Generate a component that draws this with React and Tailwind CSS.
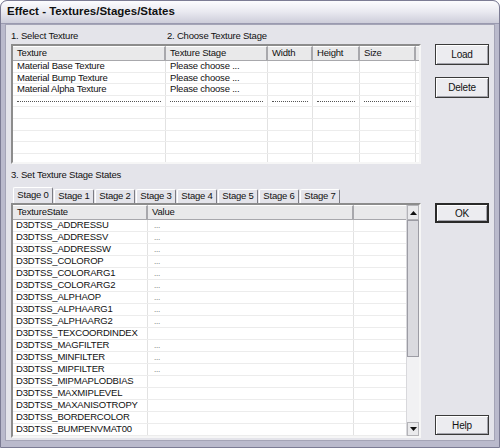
import React from 'react';

const topRows = [
  ['Material Base Texture', 'Please choose ...'],
  ['Material Bump Texture', 'Please choose ...'],
  ['Material Alpha Texture', 'Please choose ...'],
];

const topCols = [153, 102, 45, 47, 56];

const states = [
  'ADDRESSU', 'ADDRESSV', 'ADDRESSW', 'COLOROP', 'COLORARG1', 'COLORARG2',
  'ALPHAOP', 'ALPHAARG1', 'ALPHAARG2', 'TEXCOORDINDEX', 'MAGFILTER', 'MINFILTER',
  'MIPFILTER', 'MIPMAPLODBIAS', 'MAXMIPLEVEL', 'MAXANISOTROPY', 'BORDERCOLOR',
  'BUMPENVMAT00', 'BUMPENVMAT01',
];
const withValue = [0, 1, 2, 3, 4, 5, 6, 7, 8, 10, 11, 12];

function Button({ label, isDefault, className = '' }) {
  return (
    <button
      className={`w-[54px] h-[20px] bg-[#ececf0] text-[10px] text-[#111] ${isDefault ? 'border-2 border-[#2a2a2a]' : 'border border-[#3a3a3a]'} shadow-[inset_1px_1px_0_#ffffff,inset_-1px_-1px_0_#a4a4ac] ${className}`}
    >
      {label}
    </button>
  );
}

function HeaderCell({ w, children, last }) {
  return (
    <div
      style={{ width: w }}
      className={`h-full shrink-0 px-[4px] flex items-center bg-[#e9e9ea] border-t border-t-white ${last ? '' : 'border-r-2 border-r-[#a8a8ac]'}`}
    >
      {children}
    </div>
  );
}

function Arrow({ up }) {
  return (
    <svg width="7" height="4" viewBox="0 0 7 4">
      <polygon points={up ? '0,4 7,4 3.5,0' : '0,0 7,0 3.5,4'} fill="#111" />
    </svg>
  );
}

export default function App() {
  return (
    <div
      className="w-[500px] h-[448px] overflow-hidden bg-[#babacc] border border-[#7c7c94] rounded-t-[7px] flex flex-col text-[#111] tracking-[-0.2px]"
      style={{ fontFamily: '"Liberation Sans", Arial, sans-serif' }}
    >
      {/* title bar */}
      <div className="h-[23px] shrink-0 bg-gradient-to-b from-[#fcfcfe] via-[#e9e9f0] to-[#cdcdda] rounded-t-[6px] border-b border-[#9a9ab0] flex items-center pl-[6px]">
        <span className="text-[11.5px] font-bold tracking-normal">Effect - Textures/Stages/States</span>
      </div>

      {/* body */}
      <div className="flex-1 mx-[4px] mb-[6px] bg-[#e4e4ea] border border-[#a4a4b6] flex pl-[5px]">
        {/* main column */}
        <div className="w-[410px] flex flex-col text-[9.5px]">
          <div className="h-[19px] pt-[5px] flex leading-[11px]">
            <div className="w-[156px]">1. Select Texture</div>
            <div>2. Choose Texture Stage</div>
          </div>

          {/* top table */}
          <div className="h-[120px] bg-white border-2 border-t-[#8c8c8c] border-l-[#8c8c8c] border-r-[#f6f6f6] border-b-[#f6f6f6] flex flex-col overflow-hidden">
            <div className="h-[15px] shrink-0 flex border-b border-[#a8a8ac] bg-[#e9e9ea]">
              {['Texture', 'Texture Stage', 'Width', 'Height', 'Size'].map((h, i) => (
                <HeaderCell key={h} w={topCols[i]}>{h}</HeaderCell>
              ))}
              <div className="flex-1 bg-[#e9e9ea] border-t border-t-white" />
            </div>
            {Array.from({ length: 9 }).map((_, r) => (
              <div key={r} className="h-[11.6px] shrink-0 flex border-b border-[#ececec]">
                {topCols.map((w, c) => (
                  <div
                    key={c}
                    style={{ width: w }}
                    className="h-full shrink-0 border-r border-[#e2e2e2] px-[4px] flex items-center whitespace-nowrap overflow-hidden"
                  >
                    {r < 3 && c === 0 && topRows[r][0]}
                    {r < 3 && c === 1 && topRows[r][1]}
                    {r === 3 && <div className="w-full border-t border-dotted border-[#555]" />}
                  </div>
                ))}
                <div className="flex-1" />
              </div>
            ))}
          </div>

          <div className="h-[23px] pt-[5px] leading-[11px]">3. Set Texture Stage States</div>

          {/* tabs */}
          <div className="h-[16px] flex items-end gap-[1px] pl-[2px]">
            {Array.from({ length: 8 }).map((_, i) => (
              <div
                key={i}
                className={`w-[40px] flex items-center justify-center bg-[#e4e4ea] border-t border-l border-white border-r border-r-[#7c7c84] rounded-t-[2px] ${i === 0 ? 'h-[16px]' : 'h-[14px]'}`}
              >
                Stage {i}
              </div>
            ))}
          </div>

          {/* lower table */}
          <div className="h-[235px] bg-white border-2 border-t-[#8c8c8c] border-l-[#8c8c8c] border-r-[#f6f6f6] border-b-[#f6f6f6] flex overflow-hidden">
            <div className="flex-1 flex flex-col overflow-hidden">
              <div className="h-[15px] shrink-0 flex border-b border-[#a8a8ac] bg-[#e9e9ea]">
                <HeaderCell w={135}>TextureState</HeaderCell>
                <HeaderCell w={206}>Value</HeaderCell>
                <div className="flex-1 bg-[#e9e9ea] border-t border-t-white" />
              </div>
              {states.map((s, i) => (
                <div key={s} className="h-[12px] shrink-0 flex border-b border-[#ececec]">
                  <div className="w-[135px] shrink-0 h-full border-r border-[#e2e2e2] pl-[3px] flex items-center whitespace-nowrap">
                    D3DTSS_{s}
                  </div>
                  <div className="w-[206px] shrink-0 h-full border-r border-[#e2e2e2] pl-[6px] flex items-center text-[8px] text-[#666]">
                    {withValue.includes(i) ? '...' : ''}
                  </div>
                  <div className="flex-1" />
                </div>
              ))}
            </div>
            {/* scrollbar */}
            <div className="w-[13px] shrink-0 flex flex-col bg-[#f1f1f3] border-l border-[#d8d8dc]">
              <div className="h-[15px] shrink-0 flex items-center justify-center bg-[#eaeaec] border border-[#b4b4b8]">
                <Arrow up />
              </div>
              <div className="h-[137px] shrink-0 bg-[#dadadf] border border-[#9c9ca4]" />
              <div className="flex-1" />
              <div className="h-[14px] shrink-0 flex items-center justify-center bg-[#eaeaec] border border-[#b4b4b8]">
                <Arrow />
              </div>
            </div>
          </div>
        </div>

        {/* buttons column */}
        <div className="w-[54px] ml-[14px] flex flex-col">
          <Button label="Load" className="mt-[19px] h-[21px]" />
          <Button label="Delete" className="mt-[12px] h-[21px]" />
          <Button label="OK" isDefault className="mt-[105px] h-[20px]" />
          <Button label="Help" className="mt-[192px] h-[20px]" />
        </div>
      </div>
    </div>
  );
}
